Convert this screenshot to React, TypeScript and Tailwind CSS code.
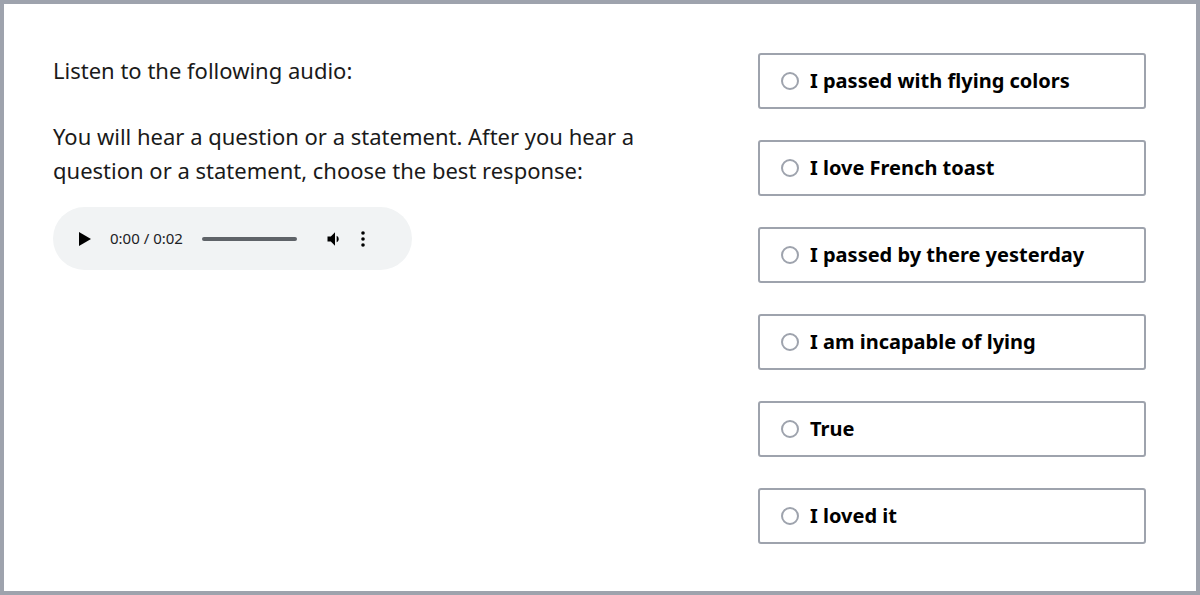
const options = [
  "I passed with flying colors",
  "I love French toast",
  "I passed by there yesterday",
  "I am incapable of lying",
  "True",
  "I loved it",
];

export default function App() {
  return (
    <div className="h-[595px] w-[1200px] border-4 border-[#9ea3ad] bg-white font-['Lato',sans-serif] text-[#1a1a1a]">
      <div className="flex justify-between pl-[49px] pr-[50px] pt-[49px]">
        <div className="w-[600px]">
          <p className="text-[22px] leading-[34px]">Listen to the following audio:</p>
          <p className="mt-[32px] text-[22px] leading-[34px]">
            You will hear a question or a statement. After you hear a question or a statement, choose the best response:
          </p>
          <div className="mt-[20px] flex h-[63px] w-[359px] items-center rounded-full bg-[#f1f3f4] pl-[26px] pr-[24px] font-['Roboto',sans-serif] text-[15px] text-[#202124]">
            <svg width="12" height="14" viewBox="0 0 12 14"><path d="M0 0 L12 7 L0 14Z" fill="#000" /></svg>
            <span className="ml-[19px]">0:00 / 0:02</span>
            <div className="ml-[19px] h-[4px] w-[95px] rounded-full bg-[#5f6368]" />
            <svg className="ml-[28px]" width="20" height="20" viewBox="0 0 24 24">
              <path d="M3 9v6h4l5 5V4L7 9H3zm13.5 3A4.5 4.5 0 0 0 14 7.97v8.05c1.48-.73 2.5-2.25 2.5-4.02z" fill="#000" />
            </svg>
            <svg className="ml-[16px]" width="4" height="16" viewBox="0 0 4 16">
              <circle cx="2" cy="2" r="1.8" fill="#000" />
              <circle cx="2" cy="8" r="1.8" fill="#000" />
              <circle cx="2" cy="14" r="1.8" fill="#000" />
            </svg>
          </div>
        </div>
        <div className="-mt-[0px] flex w-[388px] flex-col gap-[31px]">
          {options.map((o) => (
            <div
              key={o}
              className="flex h-[56px] items-center rounded-[3px] border-2 border-[#9ea3ad] pl-[21px]"
            >
              <span className="h-[18px] w-[18px] rounded-full border-2 border-[#9ea3ad]" />
              <span className="ml-[11px] text-[20px] font-bold text-black">{o}</span>
            </div>
          ))}
        </div>
      </div>
    </div>
  );
}
